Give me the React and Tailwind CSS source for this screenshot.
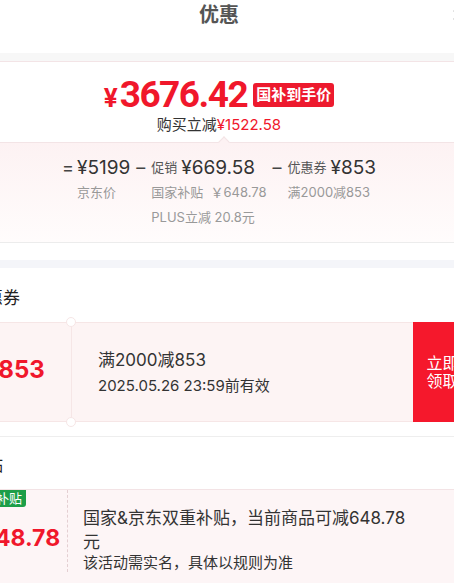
import React from "react";
import { X } from "lucide-react";

const red = "text-[#f0172b]";

const Column = ({ sign, label, value, rows }) => (
  <div className="flex">
    <span className="w-[15px] h-[25px] text-[18px] leading-[25px] text-[#444]">{sign}</span>
    <div className="flex flex-col">
      <div className="flex items-center h-[25px]">
        {label && <span className="mr-[4px] text-[13px] leading-[25px] text-[#555]">{label}</span>}
        <span className="text-[19px] leading-[25px] text-[#333]">{value}</span>
      </div>
      {rows.map((r) => (
        <div key={r} className="h-[25px] text-[13px] leading-[25px] text-[#999] whitespace-pre">
          {r}
        </div>
      ))}
    </div>
  </div>
);

export default function App() {
  return (
    <div className="w-[454px] h-[583px] overflow-hidden bg-white font-['Inter','Noto_Sans_CJK_SC',sans-serif]">
      <div className="w-[534px] -ml-[48px]">
        {/* header */}
        <div className="relative h-[53px] flex justify-center">
          <h1 className="pt-[3px] text-[20px] leading-[24px] font-bold text-[#555]">优惠</h1>
          <X className="absolute left-[498px] top-[7px] w-[16px] h-[16px] text-[#bbb]" />
        </div>
        <div className="h-[8px] bg-[#f7f7f7]" />

        {/* price */}
        <div className="h-[81px] border-t border-[#f3e4e6] pt-[12px] flex flex-col items-center">
          <div className="flex items-center h-[41px] font-['Roboto','Noto_Sans_CJK_SC',sans-serif]">
            <span className={`${red} font-bold text-[26px] leading-none mt-[6px] mr-[2px]`}>¥</span>
            <span className={`${red} font-bold text-[37px] leading-none tracking-[-1.5px]`}>3676.42</span>
            <span className="ml-[6px] bg-[#ed1a2e] text-white text-[15px] font-bold leading-[24px] px-[3px] rounded-[3px]">
              国补到手价
            </span>
          </div>
          <div className="text-[15px] leading-[20px] text-[#333]">
            购买立减<span className={red}>¥1522.58</span>
          </div>
        </div>

        {/* breakdown */}
        <div className="relative border-t border-[#f3e4e6] border-b border-b-[#ececec] bg-linear-to-b from-[#fdf2f3] to-[#fffcfc] py-[12px]">
          <div className="absolute left-[268px] -top-[5px] w-[8px] h-[8px] rotate-45 bg-[#fdf2f3] border-l border-t border-[#f3e4e6]" />
          <div className="flex justify-center gap-[6px]">
            <Column sign="=" value="¥5199" rows={["京东价"]} />
            <Column sign="–" label="促销" value="¥669.58" rows={["国家补贴  ￥648.78", "PLUS立减 20.8元"]} />
            <Column sign="–" label="优惠券" value="¥853" rows={["满2000减853"]} />
          </div>
        </div>
        <div className="h-[17px]" />
        <div className="h-[8px] bg-[#f4f5f9]" />

        {/* coupons */}
        <div className="px-[14px] pt-[18px] pb-[14px] border-b border-[#eeeeee]">
          <div className="pl-[3px] text-[17px] leading-[24px] text-[#222]">优惠券</div>
          <div className="mt-[12px] flex h-[100px]">
            <div className={`w-[105px] bg-[#fdf4f4] border border-r-0 border-[#f6e6e6] rounded-l-[4px] flex items-baseline justify-center pt-[31px] pr-[4px] font-bold ${red}`}>
              <span className="text-[16px]">¥</span>
              <span className="text-[24px] leading-[32px]">853</span>
            </div>
            <div className="relative flex-1 bg-[#fdf4f4] border border-r-0 border-[#f6e6e6] pl-[26px] flex flex-col justify-center gap-[4px] text-[#333]">
              <span className="absolute -left-[6px] -top-[6px] w-[10px] h-[10px] rounded-full bg-white border border-[#f6e6e6]" />
              <span className="absolute -left-[6px] -bottom-[6px] w-[10px] h-[10px] rounded-full bg-white border border-[#f6e6e6]" />
              <div className="text-[17px] leading-[24px]">满2000减853</div>
              <div className="text-[15px] leading-[20px]">2025.05.26 23:59前有效</div>
            </div>
            <div className="w-[59px] bg-[#f5182c] text-white text-[16px] flex flex-col items-center justify-center">
              <span className="leading-[18px]">立即</span>
              <span className="leading-[18px]">领取</span>
            </div>
          </div>
        </div>

        {/* subsidy */}
        <div className="px-[14px] pt-[16px]">
          <div className="pl-[3px] text-[17px] leading-[24px] text-[#222]">补贴</div>
          <div className="mt-[12px] flex bg-[#fdf5f6] border-t border-[#f3e3e5] pb-[30px]">
            <div className="w-[102px] border-r border-dashed border-[#e4cfd2] flex flex-col">
              <span className="self-start bg-[#1c9e48] text-white text-[13px] leading-[17px] px-[4px] rounded-br-[3px]">
                国家补贴
              </span>
              <div className={`mt-[17px] pr-[2px] text-center font-bold ${red}`}>
                <span className="text-[16px]">¥</span>
                <span className="text-[23px] leading-[28px]">648.78</span>
              </div>
            </div>
            <div className="flex-1 pl-[15px] pr-[54px] pt-[16px] text-[#333]">
              <div className="text-[17px] leading-[24px]">国家&京东双重补贴，当前商品可减648.78元</div>
              <div className="text-[15px] leading-[18px]">该活动需实名，具体以规则为准</div>
            </div>
          </div>
        </div>
      </div>
    </div>
  );
}
